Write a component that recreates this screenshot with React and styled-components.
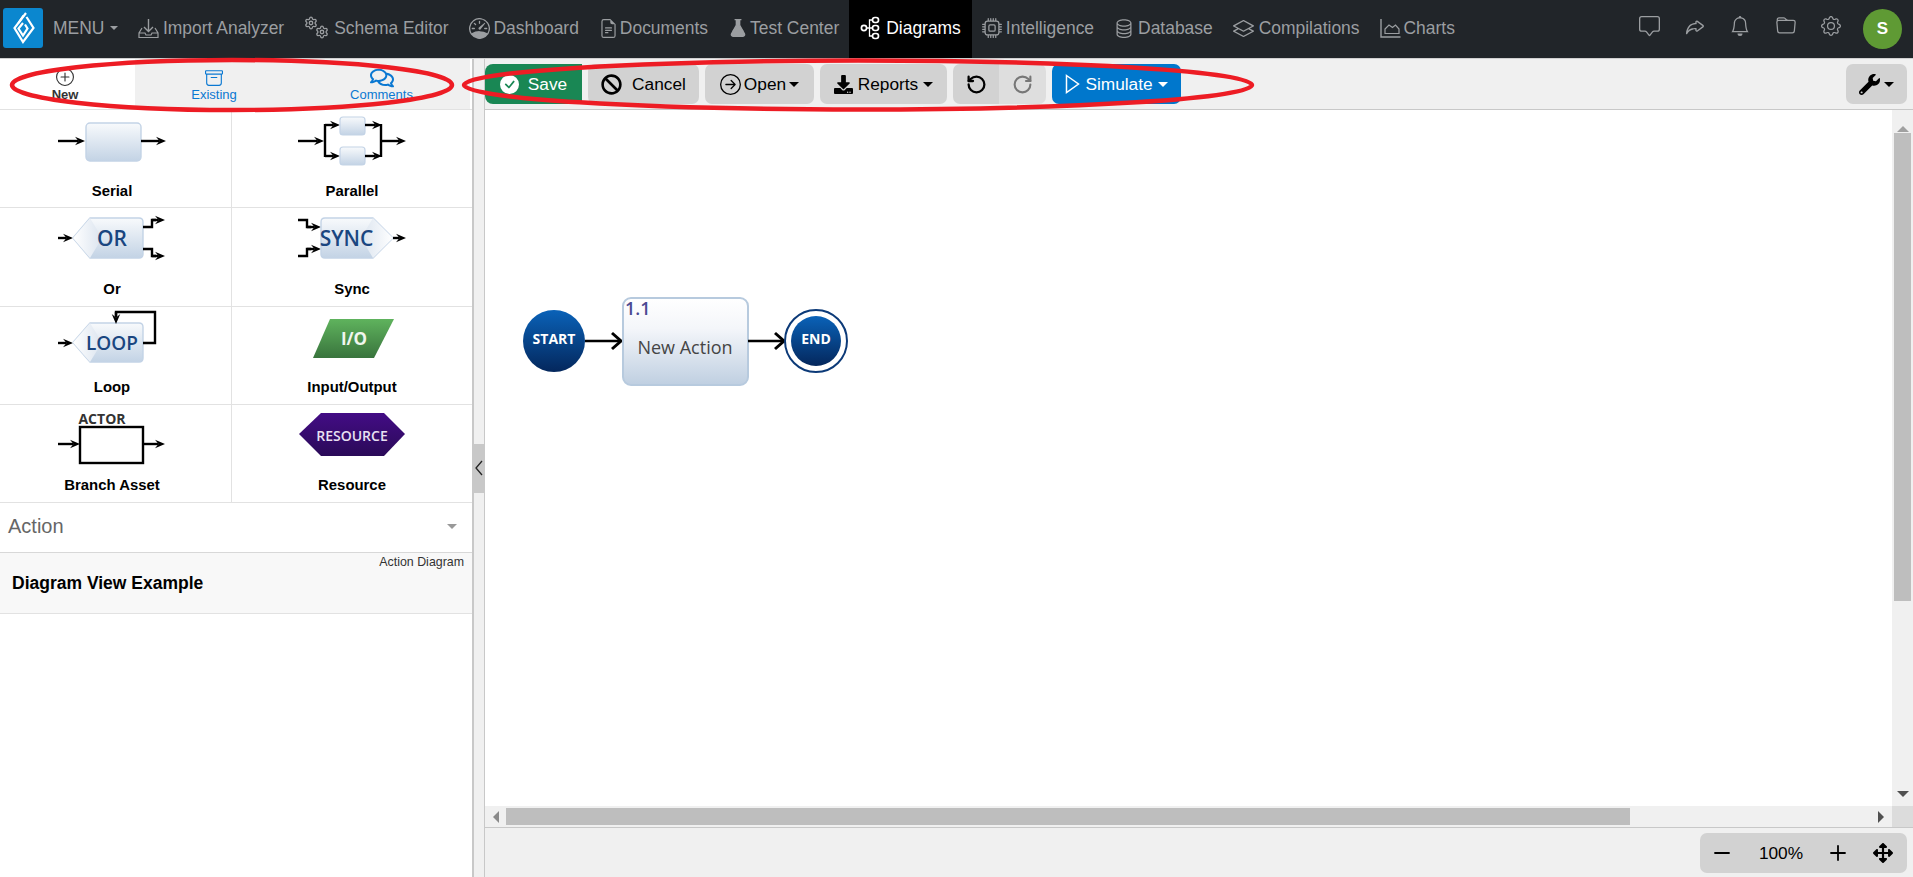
import React from "react";
import styled, { createGlobalStyle } from "styled-components";
import { BsSpeedometer, BsFileEarmarkText, BsCpu, BsDatabase, BsLayers, BsChatSquare, BsBell, BsFolder, BsGear, BsCheckCircleFill, BsArrowRightCircle, BsPlusCircle, BsArchive, BsReply } from "react-icons/bs";
import { FaBan, FaDownload, FaWrench, FaArrowsAlt, FaRegComments } from "react-icons/fa";
import { Minus, Plus, RotateCcw, RotateCw, Settings, FlaskConical } from "lucide-react";

const Global = createGlobalStyle`
  html, body { margin: 0; padding: 0; background: #fff; font-family: "Liberation Sans", Arial, sans-serif; }
  * { box-sizing: border-box; }
`;

const Page = styled.div`position: relative; width: 1913px; height: 877px; overflow: hidden; display: flex; flex-direction: column;`;
const Header = styled.header`height: 59px; flex: none; background: #212529; border-bottom: 1px solid #d0d0d0; display: flex; align-items: stretch; padding-left: 3px;`;
const Logo = styled.div`width: 40px; height: 40px; margin-top: 8px; background: #0b87cf; border-radius: 3px; display: flex; align-items: center; justify-content: center;`;
const MenuLabel = styled.div`margin-left: 10px; width: 75px; padding-bottom: 2px; display: flex; align-items: center; gap: 6px; color: #9b9ea1; font-size: 17.45px;`;
const Caret = styled.span`width: 0; height: 0; border-left: ${p => p.$s || 4}px solid transparent; border-right: ${p => p.$s || 4}px solid transparent; border-top: ${p => p.$s || 4}px solid ${p => p.$c || "currentColor"}; display: inline-block;`;
const NavItem = styled.div`display: flex; align-items: center; padding: 0 ${p => p.$active ? "11px" : "10px"} 2px; color: ${p => p.$active ? "#fff" : "#9b9ea1"}; background: ${p => p.$active ? "#000" : "transparent"}; font-size: 17.45px; white-space: nowrap;`;
const NavIcon = styled.span`width: ${p => p.$w}px; flex: none; display: flex; align-items: center;`;
const Right = styled.div`margin-left: auto; display: flex; align-items: center; padding-right: 11px; color: #9b9ea1;`;
const RightIcon = styled.span`width: 45.5px; margin-top: -6px; display: flex; justify-content: center;`;
const Avatar = styled.div`width: 39px; height: 40px; margin-left: 9px; border-radius: 50%; background: #5f9a34; color: #fff; font-weight: 700; font-size: 17px; display: flex; align-items: center; justify-content: center;`;

const Body = styled.div`flex: 1; display: flex; min-height: 0;`;
const Sidebar = styled.aside`width: 472px; flex: none; display: flex; flex-direction: column; background: #fff;`;
const Tabs = styled.div`height: 51px; flex: none; display: flex; border-bottom: 1px solid #e2e2e2;`;
const Tab = styled.div`width: ${p => p.$w}px; padding-right: ${p => p.$active ? 5 : 0}px; display: flex; flex-direction: column; align-items: center; justify-content: flex-start; padding-top: ${p => p.$active ? 9 : 10}px; background: ${p => p.$active ? "#fff" : "#f0f0f0"}; color: ${p => p.$active ? "#333" : "#0a78d2"}; font-size: 13px; font-weight: ${p => p.$active ? 700 : 400};`;
const TabIcon = styled.span`height: 18px; display: flex; align-items: center; justify-content: center;`;
const TabLabel = styled.span`margin-top: ${p => p.$active ? 1 : 0}px; line-height: 15px;`;
const Grid = styled.div`display: grid; grid-template-columns: 232px 240px; flex: none;`;
const Tool = styled.div`height: ${p => p.$h}px; border-bottom: 1px solid #e2e2e2; border-right: ${p => p.$first ? "1px solid #e2e2e2" : "none"}; padding-right: ${p => p.$first ? 7 : 0}px; display: flex; flex-direction: column; align-items: center;`;
const ToolArt = styled.svg`display: block; flex: none;`;
const ToolLabel = styled.div`font-size: 14.9px; font-weight: 700; color: #000; line-height: 16px; margin-top: ${p => p.$lift}px;`;
const SelectRow = styled.div`height: 50px; flex: none; display: flex; align-items: center; justify-content: space-between; padding: 0 15px 2px 8px; font-size: 20px; color: #666; border-bottom: 1px solid #d8d8d8;`;
const ListItem = styled.div`height: 61px; flex: none; background: #f8f8f8; border-bottom: 1px solid #e2e2e2; padding: 1px 8px 0 12px; display: flex; flex-direction: column;`;
const ItemKind = styled.div`align-self: flex-end; font-size: 12.4px; line-height: 16px; color: #333;`;
const ItemTitle = styled.div`font-size: 17.5px; font-weight: 700; color: #000; margin-top: 3px;`;

const Splitter = styled.div`width: 13px; flex: none; background: #f0f0f0; border-left: 2px solid #c8c8c8; border-right: 1px solid #c8c8c8; display: flex; align-items: center;`;
const Handle = styled.div`width: 10px; height: 49px; background: #c8c8c8; display: flex; align-items: center; justify-content: center;`;
const Main = styled.main`flex: 1; min-width: 0; display: flex; flex-direction: column; background: #f0f0f0;`;
const Toolbar = styled.div`height: 51px; flex: none; display: flex; align-items: flex-start; gap: 6px; padding: 5px 6px 0 0; border-bottom: 1px solid #c8c8c8;`;
const Btn = styled.button`height: 40px; width: ${p => p.$w}px; border: 0; padding: 0; border-radius: ${p => p.$radius || "7px"}; background: ${p => p.$bg || "#d2d2d2"}; color: ${p => p.$fg || "#000"}; font: 17.3px "Liberation Sans", Arial, sans-serif; display: flex; align-items: center; justify-content: center; gap: ${p => p.$gap ?? 6}px;`;
const Joined = styled.div`display: flex;`;
const Spacer = styled.div`flex: 1;`;
const Viewport = styled.div`flex: 1; min-height: 0; display: flex; flex-direction: column;`;
const ViewRow = styled.div`flex: 1; min-height: 0; display: flex;`;
const CanvasPane = styled.div`flex: 1; background: #fff; padding: 180px 0 0 30px;`;
const VScroll = styled.div`width: 21px; flex: none; background: #f0f0f0; display: flex; flex-direction: column; align-items: center;`;
const VThumb = styled.div`width: 17px; height: 468px; margin-top: 1px; background: #bebebe;`;
const Arrow = styled.span`width: 0; height: 0; display: block; flex: none; border: 4px solid transparent; ${p => p.$dir === "up" && `border-top-width:0;border-left-width:6px;border-right-width:6px;border-bottom:6px solid ${p.$c};`} ${p => p.$dir === "down" && `border-bottom-width:0;border-left-width:6px;border-right-width:6px;border-top:6px solid ${p.$c};`} ${p => p.$dir === "left" && `border-left-width:0;border-top-width:6px;border-bottom-width:6px;border-right:6px solid ${p.$c};`} ${p => p.$dir === "right" && `border-right-width:0;border-top-width:6px;border-bottom-width:6px;border-left:6px solid ${p.$c};`}`;
const UpSlot = styled.div`height: 22px; display: flex; align-items: flex-end; flex: none;`;
const DownSlot = styled.div`margin-top: auto; height: 15px; padding-bottom: 9px; display: flex; align-items: flex-end; flex: none;`;
const HScroll = styled.div`height: 21px; flex: none; display: flex; align-items: center; background: #f0f0f0;`;
const HThumb = styled.div`width: 1124px; height: 17px; background: #bebebe;`;
const HLeft = styled.div`width: 21px; padding-left: 8px; flex: none;`;
const HRight = styled.div`margin-left: auto; width: 30px; display: flex; justify-content: flex-end; padding-right: 8px; flex: none;`;
const Corner = styled.div`width: 21px; height: 21px; background: #dcdcdc; flex: none;`;
const Footer = styled.div`height: 50px; flex: none; border-top: 1px solid #c8c8c8; display: flex; justify-content: flex-end; padding: 5px 6px 0 0;`;
const ZoomGroup = styled.div`width: 207px; height: 40px; border-radius: 7px; background: #d2d2d2; display: grid; grid-template-columns: 44px 74px 40px 49px; align-items: center; justify-items: center; color: #000; font-size: 17.3px;`;
const CanvasArt = styled.svg`display: block;`;
const Overlay = styled.svg`position: absolute; left: 0; top: 0; pointer-events: none;`;
const ArtText = styled.text`font-family: "Open Sans", "Noto Sans", sans-serif; text-anchor: middle; dominant-baseline: central;`;

const Ar = ({ x1, y1, x2, y2, w = 2.4, head = 5 }) => {
  const dx = Math.sign(x2 - x1), dy = Math.sign(y2 - y1);
  const bx = x2 - dx * head * 2, by = y2 - dy * head * 2;
  const nx = dy * head * 0.85, ny = dx * head * 0.85;
  const mx = x2 - dx * head * 1.3, my = y2 - dy * head * 1.3;
  return (
    <g>
      <line x1={x1} y1={y1} x2={mx} y2={my} stroke="#000" strokeWidth={w} />
      <polygon points={`${x2},${y2} ${bx + nx},${by + ny} ${mx},${my} ${bx - nx},${by - ny}`} fill="#000" />
    </g>
  );
};
const PL = ({ p }) => <polyline points={p} fill="none" stroke="#000" strokeWidth="2.4" />;

const Defs = () => (
  <svg width="0" height="0" style={{ position: "absolute" }}>
    <defs>
      <linearGradient id="boxG" x1="0" y1="0" x2="0" y2="1">
        <stop offset="0" stopColor="#f8fafc" /><stop offset="1" stopColor="#c3d3e5" />
      </linearGradient>
      <linearGradient id="leftG" x1="0" y1="0" x2="1" y2="0">
        <stop offset="0" stopColor="#ffffff" /><stop offset="1" stopColor="#dbe4ef" />
      </linearGradient>
      <linearGradient id="rightG" x1="1" y1="0" x2="0" y2="0">
        <stop offset="0" stopColor="#ffffff" /><stop offset="1" stopColor="#dbe4ef" />
      </linearGradient>
      <linearGradient id="greenG" x1="0" y1="0" x2="0" y2="1">
        <stop offset="0" stopColor="#5fb35d" /><stop offset="1" stopColor="#39743d" />
      </linearGradient>
      <linearGradient id="purG" x1="0" y1="0" x2="0" y2="1">
        <stop offset="0" stopColor="#430c85" /><stop offset="1" stopColor="#2a0a58" />
      </linearGradient>
      <linearGradient id="navyG" x1="0" y1="0" x2="0" y2="1">
        <stop offset="0" stopColor="#0a62b8" /><stop offset="1" stopColor="#04275c" />
      </linearGradient>
      <linearGradient id="actG" x1="0" y1="0" x2="0" y2="1">
        <stop offset="0" stopColor="#ffffff" /><stop offset=".35" stopColor="#f4f6fa" /><stop offset="1" stopColor="#bfcfe1" />
      </linearGradient>
    </defs>
  </svg>
);

const CHEV = ({ x, y, w, h, tipLeft, label, size }) => {
  const top = y, bot = y + h, mid = y + h / 2;
  const outline = tipLeft
    ? `M${x} ${mid} L${x + 17} ${top} H${x + w - 4} Q${x + w} ${top} ${x + w} ${top + 4} V${bot - 4} Q${x + w} ${bot} ${x + w - 4} ${bot} H${x + 17} Z`
    : `M${x + w} ${mid} L${x + w - 20} ${top} H${x + 4} Q${x} ${top} ${x} ${top + 4} V${bot - 4} Q${x} ${bot} ${x + 4} ${bot} H${x + w - 20} Z`;
  const facet = tipLeft
    ? `M${x} ${mid} L${x + 17} ${top} L${x + 29} ${mid} L${x + 17} ${bot} Z`
    : `M${x + w} ${mid} L${x + w - 20} ${top} L${x + w - 32} ${mid} L${x + w - 20} ${bot} Z`;
  return (
    <g>
      <path d={outline} fill="url(#boxG)" stroke="#c3d3e6" strokeWidth="1.4" strokeLinejoin="round" />
      <path d={facet} fill={tipLeft ? "url(#leftG)" : "url(#rightG)"} />
      <ArtText x={tipLeft ? x + 39 : x + w / 2 - 10.5} y={mid} fontSize={size} fill="#1a4680" fontWeight="600">{label}</ArtText>
    </g>
  );
};

const Art = ({ cx, top, children }) => (
  <ToolArt width="170" height="80" viewBox={`${cx - 85} ${top} 170 80`}>{children}</ToolArt>
);

const tools = [
  ["Serial", 98, -7.5, <Art cx={112} top={110} key="a">
    <Ar x1={58} y1={141} x2={85} y2={141} />
    <rect x="86" y="123" width="55" height="38" rx="4" fill="url(#boxG)" stroke="#c3d3e6" strokeWidth="1.4" />
    <Ar x1={141} y1={141} x2={166} y2={141} />
  </Art>],
  ["Parallel", 98, -7.5, <Art cx={351} top={110} key="b">
    <Ar x1={297} y1={141} x2={323} y2={141} />
    <Ar x1={324} y1={125} x2={339} y2={125} />
    <Ar x1={324} y1={156} x2={339} y2={156} />
    <line x1="324" y1="124" x2="324" y2="157" stroke="#000" strokeWidth="2.4" />
    <rect x="339" y="117" width="25" height="18" rx="3" fill="url(#boxG)" stroke="#c3d3e6" strokeWidth="1.2" />
    <rect x="339" y="147" width="25" height="18" rx="3" fill="url(#boxG)" stroke="#c3d3e6" strokeWidth="1.2" />
    <Ar x1={364} y1={125} x2={381} y2={125} />
    <Ar x1={364} y1={156} x2={381} y2={156} />
    <line x1="380" y1="124" x2="380" y2="157" stroke="#000" strokeWidth="2.4" />
    <Ar x1={380} y1={141} x2={405} y2={141} />
  </Art>],
  ["Or", 99, -7.5, <Art cx={112} top={208} key="c">
    <Ar x1={58} y1={238} x2={73} y2={238} />
    <CHEV x={73} y={218} w={70} h={40} tipLeft label="OR" size={21} />
    <PL p="143,227 152,227 152,220 156,220" />
    <Ar x1={152} y1={220} x2={165} y2={220} />
    <PL p="143,249 152,249 152,256 156,256" />
    <Ar x1={152} y1={256} x2={165} y2={256} />
  </Art>],
  ["Sync", 99, -7.5, <Art cx={351} top={208} key="d">
    <PL p="297,220 306,220 306,227 310,227" />
    <Ar x1={306} y1={227} x2={320} y2={227} />
    <PL p="297,256 306,256 306,249 310,249" />
    <Ar x1={306} y1={249} x2={320} y2={249} />
    <CHEV x={320} y={218} w={72} h={40} label="SYNC" size={21} />
    <Ar x1={392} y1={238} x2={405} y2={238} />
  </Art>],
  ["Loop", 98, -8.5, <Art cx={112} top={307} key="e">
    <Ar x1={58} y1={343} x2={73} y2={343} />
    <CHEV x={73} y={323} w={70} h={39} tipLeft label="LOOP" size={19} />
    <PL p="143,343 155,343 155,312 116,312 116,316" />
    <Ar x1={116} y1={312} x2={116} y2={324} />
  </Art>],
  ["Input/Output", 98, -8.5, <Art cx={351} top={307} key="f">
    <polygon points="329,319 393,319 373,358 312,358" fill="url(#greenG)" />
    <ArtText x="353" y="338" fontSize="17" fill="#f0f6ee" fontWeight="700">I/O</ArtText>
  </Art>],
  ["Branch Asset", 98, -8.5, <Art cx={112} top={405} key="g">
    <ArtText x="102" y="418" fontSize="14" fill="#333" fontWeight="700">ACTOR</ArtText>
    <Ar x1={58} y1={444} x2={80} y2={444} />
    <rect x="80" y="427" width="63" height="36" fill="#fff" stroke="#000" strokeWidth="2.4" />
    <Ar x1={143} y1={444} x2={165} y2={444} />
  </Art>],
  ["Resource", 98, -8.5, <Art cx={351} top={405} key="h">
    <polygon points="298,434 320,413 383,413 404,434 383,456 320,456" fill="url(#purG)" />
    <ArtText x="351" y="435" fontSize="14" fill="#e8e0f2" fontWeight="600">RESOURCE</ArtText>
  </Art>],
];

const DiagramLogo = () => (
  <svg width="24" height="34" viewBox="0 0 24 34" fill="none" stroke="#fff" strokeWidth="2.2" strokeLinejoin="miter">
    <path d="M15 2 L3.5 17 L12 31 L22.5 17 L15.5 6" />
    <path d="M12.5 4.5 L7.5 12 M12 12 L7.5 17.5 L12 24.5 L16.5 17.5 L14 13.5" />
  </svg>
);
const ImportIcon = () => (
  <svg width="21" height="21" viewBox="0 0 21 21" fill="none" stroke="currentColor" strokeWidth="1.4">
    <path d="M10.5 1 V13 M6 9 L10.5 13.5 L15 9" />
    <path d="M4 10 L1 15 V19.5 H20 V15 L17 10 M1 15 H7 L8 17 H13 L14 15 H20" strokeWidth="1.2" />
  </svg>
);
const GearsIcon = () => (
  <svg width="26" height="24" viewBox="0 0 26 24">
    <svg x="0" y="0" width="14" height="14" viewBox="0 0 24 24"><Settings size={24} strokeWidth={2.2} /></svg>
    <svg x="11" y="9" width="14" height="14" viewBox="0 0 24 24"><Settings size={24} strokeWidth={2.2} /></svg>
  </svg>
);
const TreeIcon = () => (
  <svg width="21" height="24" viewBox="0 0 21 24" fill="none" stroke="#fff" strokeWidth="1.7">
    <circle cx="4" cy="12" r="2.6" /><rect x="12.5" y="1.5" width="6" height="5" rx="2.4" /><rect x="12.5" y="9.5" width="6" height="5" rx="2.4" /><rect x="12.5" y="17.5" width="6" height="5" rx="2.4" />
    <path d="M6.6 12 H12.5 M9.5 12 V4 H12.5 M9.5 12 V20 H12.5" strokeWidth="1.3" />
  </svg>
);
const ChartIcon = () => (
  <svg width="21" height="20" viewBox="0 0 21 20" fill="none" stroke="currentColor" strokeWidth="1.4">
    <path d="M1 1 V19 H20.5" /><path d="M5 15.5 V11 L9 7 L12.5 9.5 L15.5 7 L19 11 V15.5 Z" strokeWidth="1.2" />
  </svg>
);

export default function App() {
  return (
    <Page>
      <Global />
      <Defs />
      <Header>
        <Logo><DiagramLogo /></Logo>
        <MenuLabel>MENU<Caret $s={4.5} /></MenuLabel>
        <NavItem><NavIcon $w={25}><ImportIcon /></NavIcon>Import Analyzer</NavItem>
        <NavItem><NavIcon $w={30}><GearsIcon /></NavIcon>Schema Editor</NavItem>
        <NavItem><NavIcon $w={25}><BsSpeedometer size={21} /></NavIcon>Dashboard</NavItem>
        <NavItem><NavIcon $w={21}><BsFileEarmarkText size={19} /></NavIcon>Documents</NavItem>
        <NavItem><NavIcon $w={22}><FlaskConical size={20} fill="#9b9ea1" strokeWidth={1.6} /></NavIcon>Test Center</NavItem>
        <NavItem $active><NavIcon $w={26}><TreeIcon /></NavIcon>Diagrams</NavItem>
        <NavItem><NavIcon $w={24}><BsCpu size={20} /></NavIcon>Intelligence</NavItem>
        <NavItem><NavIcon $w={24}><BsDatabase size={20} /></NavIcon>Database</NavItem>
        <NavItem><NavIcon $w={26}><BsLayers size={21} /></NavIcon>Compilations</NavItem>
        <NavItem><NavIcon $w={24}><ChartIcon /></NavIcon>Charts</NavItem>
        <Right>
          <RightIcon><BsChatSquare size={21} /></RightIcon>
          <RightIcon><BsReply size={22} style={{ transform: "scaleX(-1)" }} /></RightIcon>
          <RightIcon><BsBell size={20} /></RightIcon>
          <RightIcon><BsFolder size={20} /></RightIcon>
          <RightIcon><BsGear size={20} /></RightIcon>
          <Avatar>S</Avatar>
        </Right>
      </Header>
      <Body>
        <Sidebar>
          <Tabs>
            <Tab $w={135} $active><TabIcon><BsPlusCircle size={18} /></TabIcon><TabLabel $active>New</TabLabel></Tab>
            <Tab $w={158}><TabIcon><BsArchive size={18} /></TabIcon><TabLabel>Existing</TabLabel></Tab>
            <Tab $w={177}><TabIcon><FaRegComments size={24} /></TabIcon><TabLabel>Comments</TabLabel></Tab>
          </Tabs>
          <Grid>
            {tools.map(([label, h, lift, art], i) => (
              <Tool key={label} $h={h} $first={i % 2 === 0}>
                {art}
                <ToolLabel $lift={lift}>{label}</ToolLabel>
              </Tool>
            ))}
          </Grid>
          <SelectRow>Action<Caret $s={5.5} $c="#999" /></SelectRow>
          <ListItem>
            <ItemKind>Action Diagram</ItemKind>
            <ItemTitle>Diagram View Example</ItemTitle>
          </ListItem>
        </Sidebar>
        <Splitter>
          <Handle>
            <svg width="8" height="16" viewBox="0 0 8 16" fill="none" stroke="#222" strokeWidth="1.3"><path d="M7 1 L1 8 L7 15" /></svg>
          </Handle>
        </Splitter>
        <Main>
          <Toolbar>
            <Btn $w={97} $bg="#198754" $fg="#fff" $radius="8px 0 0 8px" $gap={9}><BsCheckCircleFill size={19} />Save</Btn>
            <Btn $w={111} $gap={10}><FaBan size={21} />Cancel</Btn>
            <Btn $w={109} $gap={3}><BsArrowRightCircle size={21} />Open<Caret $s={5} /></Btn>
            <Btn $w={127} $gap={5}><FaDownload size={19} />Reports<Caret $s={5} /></Btn>
            <Joined>
              <Btn $w={46} $radius="7px 0 0 7px"><RotateCcw size={21} strokeWidth={2.6} /></Btn>
              <Btn $w={47} $bg="#dedede" $fg="#777" $radius="0 7px 7px 0"><RotateCw size={21} strokeWidth={2.4} /></Btn>
            </Joined>
            <Btn $w={129} $bg="#0077cc" $fg="#fff" $gap={5}>
              <svg width="15" height="20" viewBox="0 0 15 20" fill="none" stroke="#fff" strokeWidth="1.5"><path d="M1.5 1.5 L13.5 10 L1.5 18.5 Z" /></svg>
              Simulate<Caret $s={5} />
            </Btn>
            <Spacer />
            <Btn $w={61} $gap={4}><FaWrench size={21} /><Caret $s={5} /></Btn>
          </Toolbar>
          <Viewport>
            <ViewRow>
              <CanvasPane>
                <CanvasArt width="290" height="100" viewBox="515 290 290 100" overflow="visible">
                  <circle cx="554" cy="341" r="31" fill="url(#navyG)" />
                  <ArtText x="554" y="338" fontSize="14" fontWeight="700" fill="#fff">START</ArtText>
                  <line x1="585" y1="341" x2="620" y2="341" stroke="#000" strokeWidth="2.6" />
                  <path d="M612 333 L621 341 L612 349" fill="none" stroke="#000" strokeWidth="3" />
                  <rect x="623" y="298" width="125" height="87" rx="8" fill="url(#actG)" stroke="#b7cade" strokeWidth="2" />
                  <text x="625" y="315" fontSize="18" fill="#4b4a92" fontFamily="Open Sans, sans-serif" fontWeight="600">1.1</text>
                  <ArtText x="685" y="347" fontSize="18" fill="#454545">New Action</ArtText>
                  <line x1="748" y1="341" x2="783" y2="341" stroke="#000" strokeWidth="2.6" />
                  <path d="M775 333 L784 341 L775 349" fill="none" stroke="#000" strokeWidth="3" />
                  <circle cx="816" cy="341" r="31" fill="#fff" stroke="#0c3a78" strokeWidth="2" />
                  <circle cx="816" cy="341" r="25" fill="url(#navyG)" />
                  <ArtText x="816" y="338" fontSize="14" fontWeight="700" fill="#fff">END</ArtText>
                </CanvasArt>
              </CanvasPane>
              <VScroll>
                <UpSlot><Arrow $dir="up" $c="#a0a0a0" /></UpSlot>
                <VThumb />
                <DownSlot><Arrow $dir="down" $c="#505050" /></DownSlot>
              </VScroll>
            </ViewRow>
            <HScroll>
              <HLeft><Arrow $dir="left" $c="#8a8a8a" /></HLeft>
              <HThumb />
              <HRight><Arrow $dir="right" $c="#505050" /></HRight>
              <Corner />
            </HScroll>
          </Viewport>
          <Footer>
            <ZoomGroup>
              <Minus size={24} strokeWidth={1.8} />
              <span>100%</span>
              <Plus size={24} strokeWidth={1.8} />
              <FaArrowsAlt size={20} />
            </ZoomGroup>
          </Footer>
        </Main>
      </Body>
      <Overlay width="1913" height="877" viewBox="0 0 1913 877">
        <ellipse cx="232" cy="85" rx="220" ry="25" fill="none" stroke="#ed1c24" strokeWidth="4.5" />
        <ellipse cx="858" cy="85" rx="394" ry="24.5" fill="none" stroke="#ed1c24" strokeWidth="4.5" />
      </Overlay>
    </Page>
  );
}
